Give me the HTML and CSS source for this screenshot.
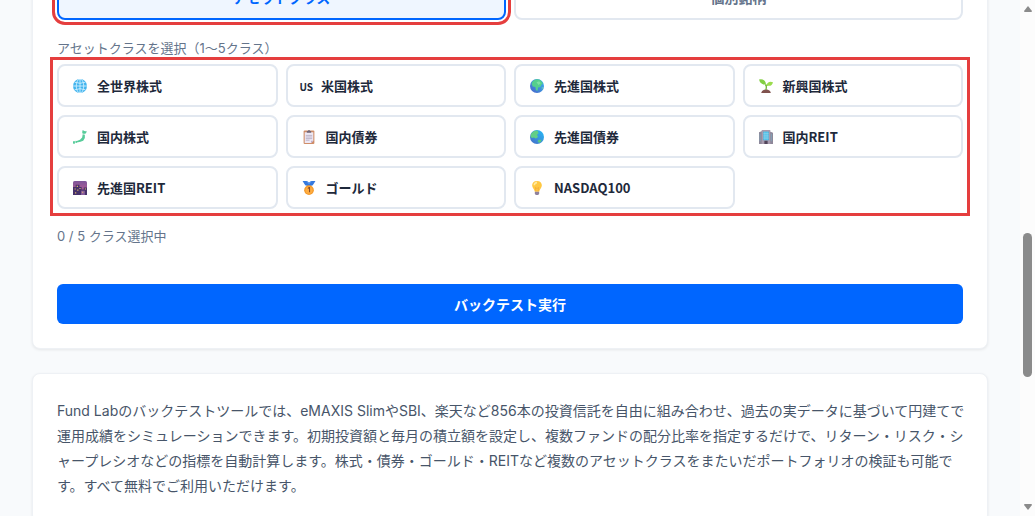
FILE: index.html
```html
<!DOCTYPE html>
<html lang="ja">
<head>
    <meta charset="UTF-8">
    <meta name="viewport" content="width=device-width, initial-scale=1.0">
    <title>Fund Lab バックテスト</title>
    <link rel="stylesheet" href="styles.css">
</head>
<body>

<div class="viewport">
    <main class="page">
        <section class="card">
            <div class="tabs">
                <button type="button" class="tab active">アセットクラス</button>
                <button type="button" class="tab">個別銘柄</button>
            </div>

            <div class="group-label" id="class-label">アセットクラスを選択（1〜5クラス）</div>
            <div class="class-grid" role="group" aria-labelledby="class-label">
                <button type="button" class="chip">
                    <span class="chip-icon"><svg viewBox="0 0 26 26">
                        <circle cx="13" cy="13" r="13" fill="#42b4ee"/>
                        <g fill="none" stroke="#d3f1ff" stroke-width="1.6"><path d="M13 0v26M0 13h26M3 6q10 4 20 0M3 20q10-4 20 0"/><ellipse cx="13" cy="13" rx="7" ry="13"/></g>
                    </svg></span>
                    全世界株式
                </button>
                <button type="button" class="chip">
                    <span class="chip-code">US</span>
                    米国株式
                </button>
                <button type="button" class="chip">
                    <span class="chip-icon"><svg viewBox="0 0 26 26">
                        <defs><linearGradient id="sea" x1="1" y1="0" x2="0" y2="1"><stop offset="0" stop-color="#35b8f0"/><stop offset="1" stop-color="#4a62c8"/></linearGradient></defs>
                        <circle cx="13" cy="13" r="13" fill="url(#sea)"/>
                        <path d="M5 4q7-6 14-2l5 6-3 3-2 4-4 1-1 6-3-1-1-6-5-1-2-5z" fill="#55cf8c"/>
                        <path d="M12 6l5-2 3 4-4 3zM22 15l2 1-2 4z" fill="#7de0a2"/>
                    </svg></span>
                    先進国株式
                </button>
                <button type="button" class="chip">
                    <span class="chip-icon"><svg viewBox="0 0 26 26">
                        <path d="M4 26q1-6 9-7 8 1 9 7z" fill="#80524e"/>
                        <path d="M13 20q2-5-1-10M13 14q2-4 6-5" fill="none" stroke="#72b83a" stroke-width="2.5"/>
                        <path d="M13 10Q3 12 0 1q12-2 13 9z" fill="#83cf43"/>
                        <path d="M14 12q2-9 12-6-2 9-12 6z" fill="#9bdc4e"/>
                    </svg></span>
                    新興国株式
                </button>
                <button type="button" class="chip">
                    <span class="chip-icon"><svg viewBox="0 0 26 26">
                        <path d="M18 0l3 2 5 1-3 4-5 0-1-3zM18 8l4 1 0 6-3 5-5 2-7 1-1-2 7-3 4-4zM5 20l4 1-2 3-3-1zM0 21l4 0-1 5-3-1z" fill="#57cc9a"/>
                    </svg></span>
                    国内株式
                </button>
                <button type="button" class="chip">
                    <span class="chip-icon"><svg viewBox="0 0 26 26">
                        <rect x="3" y="1" width="20" height="25" rx="2" fill="#cf8d68"/>
                        <path d="M5 4h16v16l-4 4H5z" fill="#eee8f4"/>
                        <path d="M17 24v-4h4z" fill="#b8a7c8"/>
                        <path d="M9 5V2h2q2-4 4 0h2v3z" fill="#716779"/>
                        <path d="M7 10h12M7 13h12M7 16h12M7 19h7" stroke="#aaa0b7" stroke-width="1.3"/>
                    </svg></span>
                    国内債券
                </button>
                <button type="button" class="chip">
                    <span class="chip-icon"><svg viewBox="0 0 26 26">
                        <defs><linearGradient id="ocean" x1="1" y1="0" x2="0" y2="1"><stop offset="0" stop-color="#26bdf8"/><stop offset="1" stop-color="#476bc5"/></linearGradient></defs>
                        <circle cx="13" cy="13" r="13" fill="url(#ocean)"/>
                        <path d="M2 7q5-7 12-6l2 5-3 3 2 4-4 3-4-2-3 1-3-2z" fill="#62ce87"/>
                        <path d="M16 18l5 0 0 3-4 3-3-3z" fill="#58c980"/>
                    </svg></span>
                    先進国債券
                </button>
                <button type="button" class="chip">
                    <span class="chip-icon"><svg viewBox="0 0 26 26">
                        <path d="M0 4l6-2v24H0zM20 3l6 2v21h-6z" fill="#8e8799"/>
                        <path d="M5 0h16v26H5z" fill="#a89caf"/>
                        <path d="M8 3h10v16H8z" fill="#36bce9"/>
                        <path d="M11 3v16M15 3v16M8 7h10M8 11h10M8 15h10" stroke="#b6dced" stroke-width="1"/>
                        <path d="M2 7v14M23 7v14" stroke="#7fa9bd" stroke-width="1.5"/>
                        <path d="M10 20h6v6h-6z" fill="#514459"/>
                    </svg></span>
                    国内REIT
                </button>
                <button type="button" class="chip">
                    <span class="chip-icon"><svg viewBox="0 0 26 26">
                        <defs><linearGradient id="dusk" x1="0" y1="0" x2="0" y2="1"><stop offset="0" stop-color="#7d559a"/><stop offset="1" stop-color="#c8608f"/></linearGradient></defs>
                        <rect width="26" height="26" rx="3" fill="url(#dusk)"/>
                        <path d="M0 11h5V7h7v4h4v5h4v-4h6v14H0z" fill="#46316a"/>
                        <path d="M15 18h7v8h-7z" fill="#8a5f9c"/>
                        <path d="M7 9h2v2H7zM3 14h2v2H3zM8 16h2v2H8zM12 13h2v2h-2zM4 21h2v2H4zM17 20h2v2h-2zM22 14h2v2h-2z" fill="#f2c66b"/>
                    </svg></span>
                    先進国REIT
                </button>
                <button type="button" class="chip">
                    <span class="chip-icon"><svg viewBox="0 0 26 26">
                        <path d="M1 0h8l4 3 4-3h8l-5 8-7 2-7-2z" fill="#3479df"/>
                        <path d="M9 0l4 5 4-5" fill="none" stroke="#79adf4" stroke-width="1.5"/>
                        <circle cx="13" cy="17" r="9" fill="#f49a2c"/>
                        <circle cx="13" cy="17" r="6.5" fill="#ffad40"/>
                        <path d="M11 14l2-2h1v9" fill="none" stroke="#874b2b" stroke-width="2"/>
                    </svg></span>
                    ゴールド
                </button>
                <button type="button" class="chip">
                    <span class="chip-icon"><svg viewBox="0 0 26 26">
                        <path d="M13 0c-6 0-9 4-9 8 0 5 4 7 5 12h8c1-5 5-7 5-12 0-4-3-8-9-8z" fill="#ffc842"/>
                        <path d="M8 8q0-5 5-5" fill="none" stroke="#ffeaa0" stroke-width="3"/>
                        <path d="M11 19l-1-7 3 2 3-2-1 7" fill="none" stroke="#f0a63a" stroke-width="1.3"/>
                        <path d="M9 20h8v4l-2 2h-4l-2-2z" fill="#8f819c"/>
                    </svg></span>
                    NASDAQ100
                </button>
            </div>

            <div class="selected-count">0 / 5 クラス選択中</div>
            <button type="button" class="run-button">バックテスト実行</button>
        </section>

        <section class="card description">
            <p>Fund Labのバックテストツールでは、eMAXIS SlimやSBI、楽天など856本の投資信託を自由に組み合わせ、過去の実データに基づいて円建てで<br>運用成績をシミュレーションできます。初期投資額と毎月の積立額を設定し、複数ファンドの配分比率を指定するだけで、リターン・リスク・シ<br>ャープレシオなどの指標を自動計算します。株式・債券・ゴールド・REITなど複数のアセットクラスをまたいだポートフォリオの検証も可能で<br>す。すべて無料でご利用いただけます。</p>
        </section>
    </main>

    <div class="scrollbar" aria-hidden="true">
        <svg class="arrow" viewBox="0 0 8 6"><path d="M4 0L8 5Q8 6 7 6H1Q0 6 0 5z"/></svg>
        <div class="track"><div class="thumb"></div></div>
        <svg class="arrow" viewBox="0 0 8 6"><path d="M4 6L8 1Q8 0 7 0H1Q0 0 0 1z"/></svg>
    </div>
</div>

</body>
</html>
```
FILE: styles.css
```css
* {
    box-sizing: border-box;
}
body {
    margin: 0;
    background-color: #f8fafc;
    color: #1e293b;
    font-family: Inter, 'Noto Sans CJK JP', sans-serif;
    font-size: 14px;
    overflow: hidden;
}
button {
    font-family: 'Noto Sans CJK JP', sans-serif;
    cursor: pointer;
}
.viewport {
    display: flex;
    height: 100vh;
    overflow: hidden;
}

/* the page is scrolled so that the tabs are cut by the window's top */
.page {
    flex: 1;
    min-width: 0;
    margin-top: -51px;
    padding: 0 32px;
}
.card {
    margin-bottom: 24px;
    padding: 24px;
    background-color: white;
    border: 1px solid #eef1f5;
    border-radius: 8px;
    box-shadow: 0 1px 3px rgba(0, 0, 0, 0.08);
}

/* Tabs */
.tabs {
    display: grid;
    grid-template-columns: 1fr 1fr;
    gap: 8px;
}
.tab {
    height: 46px;
    padding: 0;
    background-color: white;
    border: 2px solid #e2e8f0;
    border-radius: 8px;
    color: #64748b;
    font-size: 14px;
    font-weight: 600;
}
.tab.active {
    background-color: #eff6ff;
    border-color: #0066ff;
    color: #0066ff;
    outline: 3px solid #e53e3e;
    outline-offset: 2px;
}

/* Asset classes */
.group-label {
    margin-top: 20px;
    color: #64748b;
    font-size: 13px;
    line-height: 16px;
}
.class-grid {
    display: grid;
    grid-template-columns: repeat(4, 1fr);
    gap: 8px;
    margin-top: 8px;
    outline: 3px solid #e53e3e;
    outline-offset: 4px;
}
.chip {
    display: flex;
    align-items: center;
    gap: 8px;
    height: 43px;
    padding: 0 12px;
    background-color: white;
    border: 2px solid #e2e8f0;
    border-radius: 8px;
    color: #1e293b;
    font-size: 13px;
    font-weight: 600;
}
.chip-icon {
    display: flex;
    justify-content: center;
    width: 18px;
}
.chip-icon svg {
    width: 14px;
    height: 14px;
}
.chip-code {
    padding-top: 2px;
    font-size: 10px;
}
.selected-count {
    margin-top: 17px;
    color: #64748b;
    font-size: 13px;
    line-height: 20px;
}
.run-button {
    display: block;
    width: 100%;
    height: 40px;
    margin-top: 38px;
    background-color: #0066ff;
    border: none;
    border-radius: 6px;
    color: white;
    font-size: 14px;
    font-weight: 600;
}

.description {
    padding-right: 16px;
}
.description p {
    margin: 0;
    color: #475569;
    line-height: 25px;
}

/* Scrollbar */
.scrollbar {
    display: flex;
    flex-direction: column;
    align-items: center;
    width: 15px;
    padding: 6px 0;
    background-color: #fcfcfc;
}
.arrow {
    width: 8px;
    height: 6px;
    fill: #8b8b8b;
}
.track {
    flex: 1;
    padding-top: 221px;
}
.thumb {
    width: 9px;
    height: 144px;
    background-color: #8b8b8b;
    border-radius: 5px;
}
```
